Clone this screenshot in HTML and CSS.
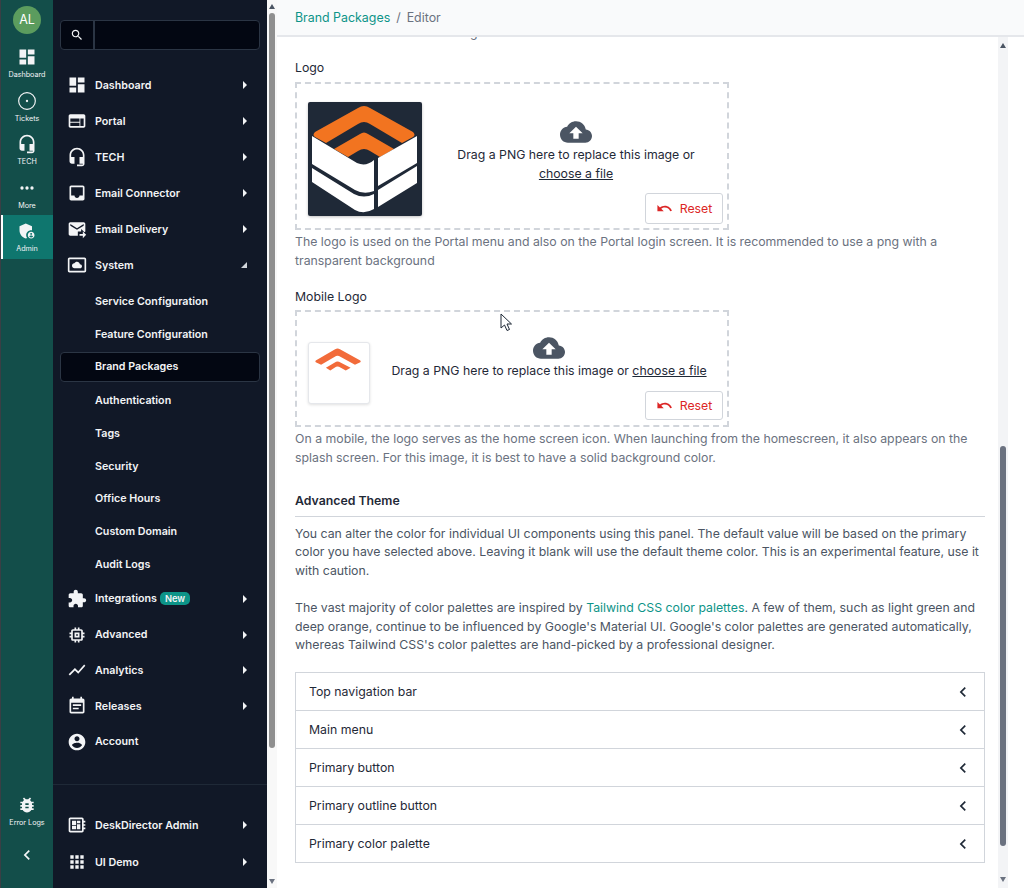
FILE: index.html
```html
<!DOCTYPE html>
<html lang="en">

<head>
    <meta charset="UTF-8">
    <meta name="viewport" content="width=device-width, initial-scale=1.0">
    <title>Brand Packages - Editor</title>
    <link rel="stylesheet" href="styles.css">
</head>

<body>
    <svg class="icon-defs" xmlns="http://www.w3.org/2000/svg">
        <symbol id="i-dashboard" viewBox="0 0 24 24"><path d="M3 13h8V3H3v10zm0 8h8v-6H3v6zm10 0h8V11h-8v10zm0-18v6h8V3h-8z"/></symbol>
        <symbol id="i-web" viewBox="0 0 24 24"><path d="M20 4H4c-1.1 0-2 .9-2 2v12c0 1.1.9 2 2 2h16c1.1 0 2-.9 2-2V6c0-1.1-.9-2-2-2zm-5 14H4v-4h11v4zm0-5H4V9h11v4zm5 5h-4V9h4v9z"/></symbol>
        <symbol id="i-headset" viewBox="0 0 24 24"><path d="M12 1c-4.97 0-9 4.03-9 9v7c0 1.66 1.34 3 3 3h3v-8H5v-2c0-3.87 3.13-7 7-7s7 3.13 7 7v2h-4v8h4v1h-7v2h6c1.66 0 3-1.34 3-3V10c0-4.97-4.03-9-9-9z"/></symbol>
        <symbol id="i-inbox" viewBox="0 0 24 24"><path d="M19 3H4.99c-1.11 0-1.98.89-1.98 2L3 19c0 1.1.88 2 1.99 2H19c1.1 0 2-.9 2-2V5c0-1.11-.9-2-2-2zm0 12h-4c0 1.66-1.35 3-3 3s-3-1.34-3-3H4.99V5H19v10z"/></symbol>
        <symbol id="i-forward-inbox" viewBox="0 0 24 24"><path d="M20 4H4c-1.1 0-2 .9-2 2v12c0 1.1.9 2 2 2h9v-5h4v-3l4 4 1-1V6c0-1.1-.9-2-2-2zm0 4l-8 5-8-5V6l8 5 8-5v2z"/><path d="M19 15l4 4-4 4v-3h-4v-2h4z"/></symbol>
        <symbol id="i-daydream" viewBox="0 0 24 24"><path d="M9 16h6.5c1.38 0 2.5-1.12 2.5-2.5S16.88 11 15.5 11h-.05c-.24-1.69-1.69-3-3.45-3-1.4 0-2.6.83-3.16 2.02h-.16C7.17 10.18 6 11.45 6 13c0 1.66 1.34 3 3 3zM21 3H3c-1.1 0-2 .9-2 2v14c0 1.1.9 2 2 2h18c1.1 0 2-.9 2-2V5c0-1.1-.9-2-2-2zm0 16.01H3V4.99h18v14.02z"/></symbol>
        <symbol id="i-extension" viewBox="0 0 24 24"><path d="M20.5 11H19V7c0-1.1-.9-2-2-2h-4V3.5C13 2.12 11.88 1 10.5 1S8 2.12 8 3.5V5H4c-1.1 0-1.99.9-1.99 2v3.8H3.5c1.49 0 2.7 1.21 2.7 2.7s-1.21 2.7-2.7 2.7H2V20c0 1.1.9 2 2 2h3.8v-1.5c0-1.49 1.21-2.7 2.7-2.7 1.49 0 2.7 1.21 2.7 2.7V22H17c1.1 0 2-.9 2-2v-4h1.5c1.38 0 2.5-1.12 2.5-2.5S21.88 11 20.5 11z"/></symbol>
        <symbol id="i-memory" viewBox="0 0 24 24"><path d="M15 9H9v6h6V9zm-2 4h-2v-2h2v2zm8-2V9h-2V7c0-1.1-.9-2-2-2h-2V3h-2v2h-2V3H9v2H7c-1.1 0-2 .9-2 2v2H3v2h2v2H3v2h2v2c0 1.1.9 2 2 2h2v2h2v-2h2v2h2v-2h2c1.1 0 2-.9 2-2v-2h2v-2h-2v-2h2zm-4 6H7V7h10v10z"/></symbol>
        <symbol id="i-chart" viewBox="0 0 24 24"><path d="M3.5 18.49l6-6.01 4 4L22 6.92l-1.41-1.41-7.09 7.97-4-4L2 16.99z"/></symbol>
        <symbol id="i-event" viewBox="0 0 24 24"><path d="M17 10H7v2h10v-2zm2-7h-1V1h-2v2H8V1H6v2H5c-1.11 0-1.99.9-1.99 2L3 19c0 1.1.89 2 2 2h14c1.1 0 2-.9 2-2V5c0-1.1-.9-2-2-2zm0 16H5V8h14v11zm-5-5H7v2h7v-2z"/></symbol>
        <symbol id="i-account" viewBox="0 0 24 24"><path d="M12 2C6.48 2 2 6.48 2 12s4.48 10 10 10 10-4.48 10-10S17.52 2 12 2zm0 3c1.66 0 3 1.34 3 3s-1.34 3-3 3-3-1.34-3-3 1.34-3 3-3zm0 14.2c-2.5 0-4.71-1.28-6-3.22.03-1.99 4-3.08 6-3.08 1.99 0 5.97 1.09 6 3.08-1.29 1.94-3.5 3.22-6 3.22z"/></symbol>
        <symbol id="i-board" viewBox="0 0 24 24"><path d="M22 9V7h-2V5c0-1.1-.9-2-2-2H4c-1.1 0-2 .9-2 2v14c0 1.1.9 2 2 2h14c1.1 0 2-.9 2-2v-2h2v-2h-2v-2h2v-2h-2V9h2zm-4 10H4V5h14v14zM6 13h5v4H6zm6-6h4v3h-4zM6 7h5v5H6zm6 4h4v6h-4z"/></symbol>
        <symbol id="i-apps" viewBox="0 0 24 24"><path d="M4 8h4V4H4v4zm6 12h4v-4h-4v4zm-6 0h4v-4H4v4zm0-6h4v-4H4v4zm6 0h4v-4h-4v4zm6-10v4h4V4h-4zm-6 4h4V4h-4v4zm6 6h4v-4h-4v4zm0 6h4v-4h-4v4z"/></symbol>
        <symbol id="i-search" viewBox="0 0 24 24"><path d="M15.5 14h-.79l-.28-.27C15.41 12.59 16 11.11 16 9.5 16 5.91 13.09 3 9.5 3S3 5.91 3 9.5 5.91 16 9.5 16c1.61 0 3.09-.59 4.23-1.57l.27.28v.79l5 4.99L20.49 19l-4.99-5zm-6 0C7.01 14 5 11.99 5 9.5S7.01 5 9.5 5 14 7.01 14 9.5 11.99 14 9.5 14z"/></symbol>
        <symbol id="i-tickets" viewBox="0 0 24 24"><circle cx="12" cy="12" r="10" fill="none" stroke="currentColor" stroke-width="1.4"/><circle cx="12" cy="12" r="1.4"/></symbol>
        <symbol id="i-more" viewBox="0 0 24 24"><circle cx="6" cy="12" r="2"/><circle cx="12" cy="12" r="2"/><circle cx="18" cy="12" r="2"/></symbol>
        <symbol id="i-admin" viewBox="0 0 24 24"><path d="M17 11c.34 0 .67.04 1 .09V6.27L10.5 3 3 6.27v4.91c0 4.54 3.2 8.79 7.5 9.82.55-.13 1.08-.32 1.6-.55-.69-.98-1.1-2.17-1.1-3.45 0-3.31 2.69-6 6-6z"/><path d="M17 13c-2.21 0-4 1.79-4 4s1.79 4 4 4 4-1.79 4-4-1.79-4-4-4zm0 1.38c.62 0 1.12.51 1.12 1.12s-.51 1.12-1.12 1.12-1.12-.51-1.12-1.12.5-1.12 1.12-1.12zm0 5.37c-.93 0-1.74-.46-2.24-1.17.05-.72 1.51-1.08 2.24-1.08s2.19.36 2.24 1.08c-.5.71-1.31 1.17-2.24 1.17z"/></symbol>
        <symbol id="i-bug" viewBox="0 0 24 24"><path d="M20 8h-2.81c-.45-.78-1.07-1.45-1.82-1.96L17 4.41 15.59 3l-2.17 2.17C12.96 5.06 12.49 5 12 5c-.49 0-.96.06-1.41.17L8.41 3 7 4.41l1.62 1.63C7.88 6.55 7.26 7.22 6.81 8H4v2h2.09c-.05.33-.09.66-.09 1v1H4v2h2v1c0 .34.04.67.09 1H4v2h2.81c1.04 1.79 2.97 3 5.19 3s4.15-1.21 5.19-3H20v-2h-2.09c.05-.33.09-.66.09-1v-1h2v-2h-2v-1c0-.34-.04-.67-.09-1H20V8zm-6 8h-4v-2h4v2zm0-4h-4v-2h4v2z"/></symbol>
        <symbol id="i-upload" viewBox="0 0 24 24"><path d="M19.35 10.04C18.67 6.59 15.64 4 12 4 9.11 4 6.6 5.64 5.35 8.04 2.34 8.36 0 10.91 0 14c0 3.31 2.69 6 6 6h13c2.76 0 5-2.24 5-5 0-2.64-2.05-4.78-4.65-4.96zM14 13v4h-4v-4H7l5-5 5 5h-3z"/></symbol>
        <symbol id="i-undo" viewBox="0 0 24 24"><path d="M12.5 8c-2.65 0-5.05.99-6.9 2.6L2 7v9h9l-3.62-3.62c1.39-1.16 3.16-1.88 5.12-1.88 3.54 0 6.55 2.31 7.6 5.5l2.37-.78C21.08 11.03 17.15 8 12.5 8z"/></symbol>
        <symbol id="i-chevron" viewBox="0 0 24 24"><path d="M15.41 7.41L14 6l-6 6 6 6 1.41-1.41L10.83 12z"/></symbol>
    </svg>

    <nav class="rail">
        <div class="avatar">AL</div>
        <a class="rail-item"><svg class="icon"><use href="#i-dashboard"/></svg><span>Dashboard</span></a>
        <a class="rail-item"><svg class="icon"><use href="#i-tickets"/></svg><span>Tickets</span></a>
        <a class="rail-item"><svg class="icon"><use href="#i-headset"/></svg><span>TECH</span></a>
        <a class="rail-item"><svg class="icon"><use href="#i-more"/></svg><span>More</span></a>
        <a class="rail-item active"><svg class="icon"><use href="#i-admin"/></svg><span>Admin</span></a>
        <div class="rail-bottom">
            <a class="rail-item"><svg class="icon"><use href="#i-bug"/></svg><span>Error Logs</span></a>
            <svg class="icon rail-collapse"><use href="#i-chevron"/></svg>
        </div>
    </nav>

    <aside class="sidebar">
        <div class="search">
            <span class="search-btn"><svg class="icon"><use href="#i-search"/></svg></span>
            <span class="search-input"></span>
        </div>

        <ul class="menu">
            <li class="menu-item"><svg class="icon"><use href="#i-dashboard"/></svg><span>Dashboard</span><i class="caret"></i></li>
            <li class="menu-item"><svg class="icon"><use href="#i-web"/></svg><span>Portal</span><i class="caret"></i></li>
            <li class="menu-item"><svg class="icon"><use href="#i-headset"/></svg><span>TECH</span><i class="caret"></i></li>
            <li class="menu-item"><svg class="icon"><use href="#i-inbox"/></svg><span>Email Connector</span><i class="caret"></i></li>
            <li class="menu-item"><svg class="icon"><use href="#i-forward-inbox"/></svg><span>Email Delivery</span><i class="caret"></i></li>
            <li class="menu-item system"><svg class="icon"><use href="#i-daydream"/></svg><span>System</span><i class="caret open"></i></li>
            <li class="sub-item">Service Configuration</li>
            <li class="sub-item">Feature Configuration</li>
            <li class="sub-item current">Brand Packages</li>
            <li class="sub-item">Authentication</li>
            <li class="sub-item">Tags</li>
            <li class="sub-item">Security</li>
            <li class="sub-item">Office Hours</li>
            <li class="sub-item">Custom Domain</li>
            <li class="sub-item">Audit Logs</li>
            <li class="menu-item tight"><svg class="icon"><use href="#i-extension"/></svg><span>Integrations</span><b class="new-badge">New</b><i class="caret"></i></li>
            <li class="menu-item tight"><svg class="icon"><use href="#i-memory"/></svg><span>Advanced</span><i class="caret"></i></li>
            <li class="menu-item tight"><svg class="icon"><use href="#i-chart"/></svg><span>Analytics</span><i class="caret"></i></li>
            <li class="menu-item tight"><svg class="icon"><use href="#i-event"/></svg><span>Releases</span><i class="caret"></i></li>
            <li class="menu-item tight"><svg class="icon"><use href="#i-account"/></svg><span>Account</span></li>
        </ul>

        <ul class="menu menu-bottom">
            <li class="menu-item"><svg class="icon"><use href="#i-board"/></svg><span>DeskDirector Admin</span><i class="caret"></i></li>
            <li class="menu-item"><svg class="icon"><use href="#i-apps"/></svg><span>UI Demo</span><i class="caret"></i></li>
        </ul>
    </aside>

    <div class="side-scrollbar">
        <i class="arrow up"></i>
        <div class="side-thumb"></div>
        <i class="arrow down"></i>
    </div>

    <main class="page">
        <header class="topbar">
            <a class="crumb-link">Brand Packages</a>
            <span class="crumb-sep">/</span>
            <span class="crumb-current">Editor</span>
        </header>

        <div class="page-body">
            <div class="content">
                <p class="cut-line"><span>g</span></p>

                <h3 class="field-label">Logo</h3>
                <div class="dropzone logo-zone">
                    <div class="thumb thumb-logo">
                        <svg viewBox="0 0 114 114" width="114" height="114">
                            <rect width="114" height="114" rx="2" fill="#1f2937"/>
                            <path d="M50 6 Q56 2 62 6 L105 30 Q108 33 105 35 L94 41 L62 22 Q56 18 50 22 L18 41 L7 35 Q4 33 7 30 Z" fill="#f27420"/>
                            <path d="M52 32 Q56 29 60 32 L86 47 L72 55 L62 49 Q56 45 50 49 L40 55 L26 47 Z" fill="#f27420"/>
                            <path d="M4 34 L49 61 Q58 65 66 58 L66 89 Q56 93 47 88 L4 62 Z" fill="#fff"/>
                            <path d="M70 56 L109 34 L109 61 L70 84 Z" fill="#fff"/>
                            <path d="M4 66 L46 92 Q56 97 66 92 L66 107 Q56 113 47 108 L4 80 Z" fill="#fff"/>
                            <path d="M70 88 L109 64 L109 81 L70 105 Z" fill="#fff"/>
                        </svg>
                    </div>
                    <div class="drop-text">
                        <svg class="icon upload"><use href="#i-upload"/></svg>
                        <p>Drag a PNG here to replace this image or</p>
                        <p><a class="file-link">choose a file</a></p>
                    </div>
                    <button class="reset"><svg class="icon"><use href="#i-undo"/></svg>Reset</button>
                </div>
                <p class="help">The logo is used on the Portal menu and also on the Portal login screen. It is recommended to use a png with a transparent background</p>

                <h3 class="field-label second">Mobile Logo</h3>
                <div class="dropzone mobile-zone">
                    <div class="thumb thumb-mobile">
                        <svg viewBox="0 0 62 62" width="60" height="60">
                            <path d="M27 6.500 Q29.500 5 32 6.500 L53 18 Q54 19 53 20 L47.500 22.500 L31 13.500 Q29.500 13 28 13.500 L12.500 22.500 L7 20 Q6 19 7 18 Z" fill="#f26b3a"/>
                            <path d="M28 19.500 Q29.500 18.500 31 19.500 L43 25.500 L38 28.500 L31 24.500 Q29.500 24 28 24.500 L22 28.500 L17.500 25.500 Z" fill="#f26b3a"/>
                        </svg>
                    </div>
                    <div class="drop-text">
                        <svg class="icon upload"><use href="#i-upload"/></svg>
                        <p>Drag a PNG here to replace this image or <a class="file-link">choose a file</a></p>
                    </div>
                    <button class="reset"><svg class="icon"><use href="#i-undo"/></svg>Reset</button>
                    <svg class="cursor" viewBox="0 0 13 19" width="13" height="19"><path d="M1 1 L1 15 L4.500 12 L7 17.500 L9.500 16.500 L7 11 L11.500 11 Z" fill="#fff" stroke="#1f2937" stroke-width="1"/></svg>
                </div>
                <p class="help">On a mobile, the logo serves as the home screen icon. When launching from the homescreen, it also appears on the splash screen. For this image, it is best to have a solid background color.</p>

                <h2 class="section-title">Advanced Theme</h2>
                <p class="body-text">You can alter the color for individual UI components using this panel. The default value will be based on the primary color you have selected above. Leaving it blank will use the default theme color. This is an experimental feature, use it with caution.</p>
                <p class="body-text next">The vast majority of color palettes are inspired by <a class="crumb-link">Tailwind CSS color palettes</a>. A few of them, such as light green and deep orange, continue to be influenced by Google's Material UI. Google's color palettes are generated automatically, whereas Tailwind CSS's color palettes are hand-picked by a professional designer.</p>

                <div class="accordion">
                    <div class="acc-row"><span>Top navigation bar</span><svg class="icon"><use href="#i-chevron"/></svg></div>
                    <div class="acc-row"><span>Main menu</span><svg class="icon"><use href="#i-chevron"/></svg></div>
                    <div class="acc-row"><span>Primary button</span><svg class="icon"><use href="#i-chevron"/></svg></div>
                    <div class="acc-row"><span>Primary outline button</span><svg class="icon"><use href="#i-chevron"/></svg></div>
                    <div class="acc-row"><span>Primary color palette</span><svg class="icon"><use href="#i-chevron"/></svg></div>
                </div>
            </div>

            <div class="main-scrollbar">
                <i class="arrow up"></i>
                <div class="main-thumb"></div>
                <i class="arrow down"></i>
            </div>
        </div>
    </main>
</body>

</html>
```

FILE: styles.css
```css
* {
    box-sizing: border-box;
    margin: 0;
    padding: 0;
}

html,
body {
    height: 888px;
    overflow: hidden;
}

body {
    display: flex;
    font-family: Inter, 'Liberation Sans', sans-serif;
    font-size: 12.3px;
    color: #1f2937;
    background: #fff;
}

.icon-defs {
    display: none;
}

.icon {
    width: 20px;
    height: 20px;
    fill: currentColor;
    flex: none;
}

/* far left rail */
.rail {
    width: 53px;
    flex: none;
    display: flex;
    flex-direction: column;
    align-items: center;
    background: #134e4a;
    border-left: 1px solid #3a3f45;
    color: #f3f4f6;
}

.avatar {
    width: 28px;
    height: 28px;
    margin: 6px 0 7px;
    border-radius: 50%;
    background: #5b9c5e;
    color: #fff;
    font-size: 12.5px;
    line-height: 28px;
    text-align: center;
}

.rail-item {
    width: 100%;
    height: 43.5px;
    display: flex;
    flex-direction: column;
    align-items: center;
    justify-content: center;
    gap: 2px;
    padding-top: 2px;
    font-size: 7.2px;
    line-height: 11px;
}

.rail-item.active {
    background: #0f766e;
    border-left: 2px solid #fff;
    padding-right: 2px;
}

.rail-bottom {
    margin-top: auto;
    width: 100%;
    display: flex;
    flex-direction: column;
    align-items: center;
    padding-bottom: 23px;
}

.rail-collapse {
    margin-top: 12.5px;
}

/* dark menu */
.sidebar {
    width: 214px;
    flex: none;
    display: flex;
    flex-direction: column;
    background: #111827;
    color: #f3f4f6;
    padding-top: 20px;
}

.search {
    display: flex;
    height: 30px;
    margin: 0 7px 17px;
    background: #030712;
    border: 1px solid #2b3544;
    border-radius: 4px;
}

.search-btn {
    width: 34px;
    display: flex;
    align-items: center;
    justify-content: center;
    border-right: 2px solid #2b3544;
}

.search-btn .icon {
    width: 14px;
    height: 14px;
}

.menu {
    list-style: none;
}

.menu-item {
    height: 36px;
    display: flex;
    align-items: center;
    padding: 0 20px 0 14px;
    font-size: 10.7px;
    font-weight: 600;
}

.menu-item.tight {
    height: 35.75px;
}

.menu-item.system {
    margin-bottom: 2px;
}

.menu-item .icon {
    margin-right: 8px;
}

.caret {
    margin-left: auto;
    width: 0;
    height: 0;
    border-left: 4px solid #f3f4f6;
    border-top: 4px solid transparent;
    border-bottom: 4px solid transparent;
}

.caret.open {
    border-left: 6px solid transparent;
    border-top: 0;
    border-bottom: 6px solid #d1d5db;
}

.new-badge {
    margin-left: 3px;
    padding: 0 5px;
    border-radius: 5px;
    background: #0d9488;
    font-size: 9.3px;
    font-weight: 600;
    line-height: 13px;
}

.sub-item {
    height: 32.875px;
    margin: 0 7px;
    padding-left: 34px;
    border: 1px solid transparent;
    line-height: 31px;
    font-size: 10.7px;
    font-weight: 600;
}

.sub-item.current {
    height: 30px;
    margin: 1.5px 7px 1.5px;
    line-height: 28px;
    background: #030712;
    border-color: #2b3544;
    border-radius: 4px;
}

.menu-bottom {
    margin-top: auto;
    padding: 22px 0 8px;
    border-top: 1px solid #1f2937;
}

.menu-bottom .menu-item:first-child {
    margin-bottom: 1px;
}

.side-scrollbar {
    width: 10px;
    flex: none;
    display: flex;
    flex-direction: column;
    align-items: center;
    padding: 4px 2px;
    background: #f8f8f8;
}

.side-thumb {
    width: 6px;
    height: 735px;
    margin-top: 4px;
    border-radius: 3px;
    background: #8f8f8f;
}

.side-scrollbar .arrow.down {
    margin-top: auto;
}

/* main column */
.page {
    flex: 1;
    min-width: 0;
    display: flex;
    flex-direction: column;
}

.topbar {
    height: 37px;
    flex: none;
    display: flex;
    align-items: center;
    gap: 6px;
    padding-left: 18px;
    background: #f9fafb;
    border-bottom: 2px solid #e5e7eb;
    font-size: 12.4px;
}

.crumb-link {
    color: #0d9488;
}

.crumb-sep,
.crumb-current {
    color: #6b7280;
}

.page-body {
    flex: 1;
    min-height: 0;
    display: flex;
    padding-right: 16px;
}

.content {
    flex: 1;
    min-width: 0;
    padding: 0 13px 0 18px;
    overflow: hidden;
}

/* tail of a line that has scrolled under the top bar */
.cut-line {
    height: 3px;
    padding-left: 175px;
    overflow: hidden;
    color: #6b7280;
}

.cut-line span {
    display: block;
    margin-top: -4px;
    line-height: 0;
}

.field-label {
    margin: 18px 0 4px;
    height: 20px;
    font-size: 12.3px;
    font-weight: 400;
    line-height: 20px;
}

.field-label.second {
    margin: 17px 0 3px;
}

.dropzone {
    position: relative;
    width: 434px;
    display: flex;
    align-items: center;
    padding: 0 5px 0 11px;
    border: 2px dashed #d1d5db;
}

.logo-zone {
    height: 148px;
}

.mobile-zone {
    height: 117px;
}

.thumb {
    flex: none;
    border-radius: 3px;
    background: #fff;
    line-height: 0;
}

.thumb-logo {
    width: 114px;
    height: 114px;
    margin-top: 5px;
    box-shadow: 0 1px 3px rgba(0, 0, 0, 0.25);
}

.thumb-mobile {
    width: 62px;
    height: 62px;
    margin-top: 8px;
    border: 1px solid #e5e7eb;
    box-shadow: 0 1px 3px rgba(0, 0, 0, 0.12);
}

.drop-text {
    flex: 1;
    display: flex;
    flex-direction: column;
    align-items: center;
    text-align: center;
    line-height: 19px;
    padding: 0 0 26px 6px;
}

.logo-zone .drop-text {
    padding: 0 0 14px 8px;
}

.upload {
    width: 32px;
    height: 32px;
    margin-bottom: -3px;
    color: #4b5563;
}

.file-link {
    text-decoration: underline;
}

.reset {
    position: absolute;
    right: 4px;
    bottom: 4px;
    width: 78px;
    height: 31px;
    display: flex;
    align-items: center;
    justify-content: center;
    gap: 7px;
    background: #fff;
    border: 1px solid #d1d5db;
    border-radius: 3px;
    color: #dc2626;
    font-family: inherit;
    font-size: 12.3px;
}

.reset .icon {
    width: 17px;
    height: 17px;
}

.mobile-zone .reset {
    height: 29px;
    bottom: 5px;
}

.cursor {
    position: absolute;
    left: 203px;
    top: 1px;
}

.help {
    margin-top: 2px;
    color: #6b7280;
    line-height: 19px;
}

.section-title {
    margin-top: 24px;
    padding-bottom: 5px;
    border-bottom: 1px solid #d1d5db;
    font-size: 12.3px;
    font-weight: 600;
    line-height: 20px;
}

.body-text {
    margin-top: 7.5px;
    color: #4b5563;
    line-height: 18.5px;
}

.body-text.next {
    margin-top: 19px;
}

.accordion {
    margin-top: 17.5px;
    border: 1px solid #d1d5db;
}

.acc-row {
    height: 38px;
    display: flex;
    align-items: center;
    justify-content: space-between;
    padding: 0 11px 0 13px;
    border-bottom: 1px solid #d1d5db;
}

.acc-row:last-child {
    height: 37px;
    border-bottom: 0;
}

.main-scrollbar {
    width: 10px;
    flex: none;
    display: flex;
    flex-direction: column;
    align-items: center;
    background: #f3f4f6;
    padding: 6px 2px;
}

.main-thumb {
    width: 6px;
    height: 400px;
    margin-top: auto;
    margin-bottom: 31px;
    border-radius: 3px;
    background: #6b7280;
}

.arrow {
    flex: none;
    width: 0;
    height: 0;
    border-left: 3px solid transparent;
    border-right: 3px solid transparent;
}

.arrow.up {
    border-bottom: 5px solid #4b5563;
}

.arrow.down {
    border-top: 5px solid #6b7280;
}
```
